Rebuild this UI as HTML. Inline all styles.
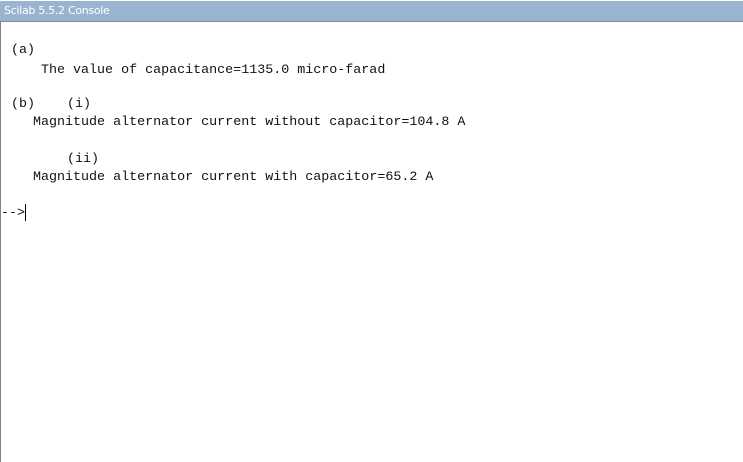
<!DOCTYPE html>
<html><head><style>
html,body{margin:0;padding:0;width:743px;height:462px;overflow:hidden;background:#fff}
#t{position:absolute;left:0;top:1px;width:743px;height:20px;background:#99b3d1;border-bottom:1px solid #7f8a96;color:#fff;font-family:"DejaVu Sans","Liberation Sans",sans-serif;font-size:11px;line-height:20px;text-indent:4px;letter-spacing:-0.3px}
#lb{position:absolute;left:0;top:22px;width:1px;height:440px;background:#808080}
.l{position:absolute;font-family:"Liberation Mono",monospace;font-size:13.35px;line-height:18px;white-space:pre;color:#111}
#cur{position:absolute;left:25px;top:204px;width:1px;height:17px;background:#000}
</style></head><body>
<div id="t">Scilab 5.5.2 Console</div>
<div id="lb"></div>
<div class="l" style="left:11px;top:42px">(a)</div>
<div class="l" style="left:41px;top:62px">The value of capacitance=1135.0 micro-farad</div>
<div class="l" style="left:11px;top:96px">(b)</div>
<div class="l" style="left:67px;top:96px">(i)</div>
<div class="l" style="left:33px;top:114px">Magnitude alternator current without capacitor=104.8 A</div>
<div class="l" style="left:67px;top:151px">(ii)</div>
<div class="l" style="left:33px;top:169px">Magnitude alternator current with capacitor=65.2 A</div>
<div class="l" style="left:1px;top:205px">--&gt;</div>
<div id="cur"></div>
</body></html>
